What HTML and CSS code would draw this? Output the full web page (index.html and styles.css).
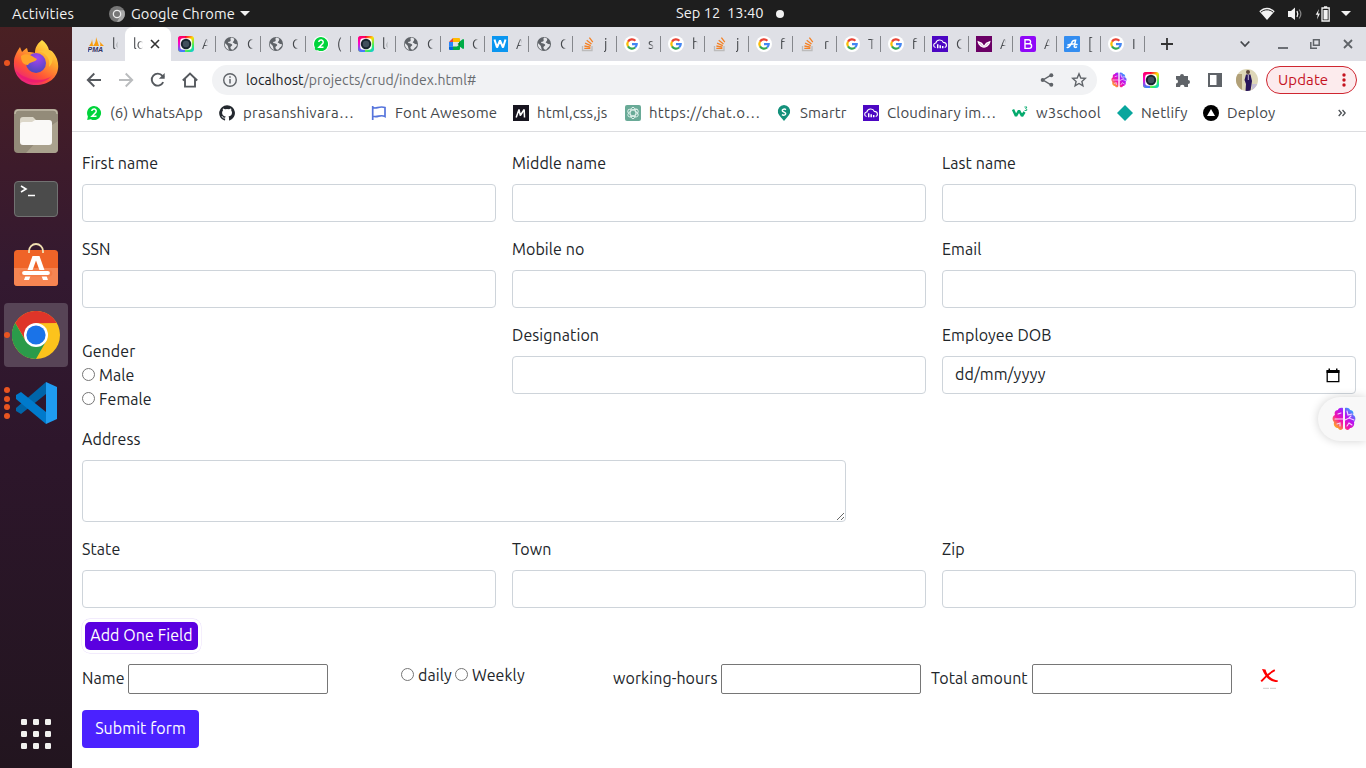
FILE: index.html
```html
<!DOCTYPE html>
<html lang="en">
<head>
<meta charset="utf-8">
<title>localhost/projects/crud</title>
<link rel="stylesheet" href="styles.css">
</head>
<body>
<svg class="defs" width="0" height="0">
  <defs>
    <linearGradient id="rainbow" x1="0" y1="0" x2="1" y2="1"><stop offset="0" stop-color="#f0f"/><stop offset=".25" stop-color="#f03"/><stop offset=".5" stop-color="#fd0"/><stop offset=".78" stop-color="#3e6"/><stop offset="1" stop-color="#0bf"/></linearGradient>
    <linearGradient id="camleft" x1="0" y1="0" x2="0" y2="1"><stop offset="0" stop-color="#ff0059"/><stop offset=".45" stop-color="#f0c"/><stop offset="1" stop-color="#38f"/></linearGradient>
    <linearGradient id="brainfill" x1="0" y1="1" x2="1" y2="0"><stop offset="0.15" stop-color="#ffa02c"/><stop offset=".38" stop-color="#f413a8"/><stop offset=".62" stop-color="#b414f5"/><stop offset=".85" stop-color="#389fff"/></linearGradient>
    <linearGradient id="ffbody" x1=".8" y1="0" x2=".2" y2="1"><stop offset="0" stop-color="#fff04f"/><stop offset=".35" stop-color="#ffa52c"/><stop offset=".68" stop-color="#ff5237"/><stop offset="1" stop-color="#e6178c"/></linearGradient>
    <radialGradient id="ffglobe" cx=".55" cy=".25" r=".8"><stop offset="0" stop-color="#a544f0"/><stop offset="1" stop-color="#4548b8"/></radialGradient>
    <symbol id="camera" viewBox="0 0 16 16"><rect width="16" height="16" rx="3" fill="url(#rainbow)"/><path d="M3 0H7V16H3A3 3 0 0 1 0 13V3A3 3 0 0 1 3 0" fill="url(#camleft)"/><rect x="2.2" y="2.2" width="11.6" height="11.6" rx="3" fill="#fff"/><circle cx="8" cy="8" r="5.2" fill="#18262f"/><circle cx="8" cy="8" r="3.2" fill="#41505c"/></symbol>
    <symbol id="globe" viewBox="0 0 16 16"><circle cx="8" cy="8" r="7" fill="#5f6368"/><path d="M8.5 1.5C6 3 9 4 7 5.5L5 6C5 8 8 7 9 8.5C10 10 7 10 7.5 12C8 14 10 14 11 13C12 11 14 11 14 8C12.5 9 11.5 7 10 6.7C9 6 12 5 11 2.5ZM1.8 7L4 9C5.5 10 5 12 6 14C3.5 13 1.8 11 1.8 8" fill="#e4e5e9"/></symbol>
    <symbol id="whats" viewBox="0 0 16 16"><path d="M8 1A7 7 0 1 1 4.8 14.2L1.2 15 1.9 11.4A7 7 0 0 1 8 1" fill="#00d43b"/><path d="M5.8 6A2.2 2.2 0 1 1 9.9 7.2L6 11.2H10.5" fill="none" stroke="#fff" stroke-width="1.5"/></symbol>
    <symbol id="meet" viewBox="0 0 16 16"><path d="M1 6L5 2V6Z" fill="#ea4335"/><path d="M5 2H11Q12 2 12 3V6H5Z" fill="#ffba00"/><path d="M1 6H5V10.5H1Z" fill="#2684fc"/><path d="M1 10.5H5V14H2Q1 14 1 13Z" fill="#0066da"/><path d="M5 10.5H9L12 8V13Q12 14 11 14H5ZM11 6L15 3Q16 3 16 4V12Q16 13 15 13L11 10Z" fill="#00ac47"/><path d="M9.5 8L12 6V10Z" fill="#00832d"/></symbol>
    <symbol id="stack" viewBox="0 0 16 16"><path d="M2.5 10V14.5H12V10" fill="none" stroke="#bcbbbb" stroke-width="1.3"/><path d="M4.3 12.4H10.4M4.4 10L10.4 11.1M5.1 7.2L10.8 9.6M6.7 4.2L11.5 7.9M9.4 1.6L12.8 6.2" stroke="#f48024" stroke-width="1.3"/></symbol>
    <symbol id="google" viewBox="0 0 16 16"><circle cx="8" cy="8" r="8" fill="#fff"/><g fill="none" stroke-width="2.2"><path d="M4 5.6A4.7 4.7 0 0 1 11.4 4.7" stroke="#ea4335"/><path d="M4 5.6A4.7 4.7 0 0 0 4 10.4" stroke="#fbbc05"/><path d="M4 10.4A4.7 4.7 0 0 0 11.1 11.5" stroke="#34a853"/><path d="M8 8.2H12.7A4.7 4.7 0 0 1 11.1 11.5" stroke="#4285f4"/></g></symbol>
    <symbol id="cloud" viewBox="0 0 16 16"><rect width="16" height="16" fill="#4c06c3"/><path d="M3.6 11.5C.8 11 1.2 7.2 3.8 7C4.7 3.3 10.1 3 11.3 6.4C15 6.4 15.3 10.8 12.7 11.5" fill="none" stroke="#fff" stroke-width="1.1"/><path d="M5.7 8.2V12.3M8.2 9.2V12.3M10.7 10V12.3" stroke="#fff" stroke-width="1.5"/></symbol>
    <symbol id="wing" viewBox="0 0 16 16"><rect width="16" height="16" fill="#6b0065"/><path d="M1.4 4.7L6 6.7 8 9.4 10 6.7 14.6 4.7C14 9 11.5 11 8 11.8C4.5 11 2 9 1.4 4.7" fill="#fff"/><path d="M3.5 7L7 10.5M12.5 7L9 10.5" stroke="#c98ac4" stroke-width=".8"/></symbol>
    <symbol id="brain" viewBox="0 0 24 24"><path d="M11 1C8 0 6 2 6 3C3 3 2 6 3 8C0 9 0 13 2 15C1 19 4 21 6 21C7 24 11 23 11 21ZM13 1C16 0 18 2 18 3C21 3 22 6 21 8C24 9 24 13 22 15C23 19 20 21 18 21C17 24 13 23 13 21Z" fill="url(#brainfill)"/><path d="M6 7L9 6M3 12H11M5 17L8 16V19M15 4L16 8 20 7M13 13L17 11 22 13M15 19L17 16 20 18M17 11L19 9" fill="none" stroke="#f5d9ff" stroke-width="1.1" stroke-linecap="round"/></symbol>
  </defs>
</svg>

<header class="topbar">
  <span class="activities">Activities</span>
  <div class="appmenu">
    <svg width="16" height="16" viewBox="0 0 16 16"><circle cx="8" cy="8" r="8" fill="#777"/><path d="M8 4.3H15A8 8 0 0 1 8 16L11.3 9.8Z" fill="#aaa"/><circle cx="8" cy="8" r="4.3" fill="#eee"/><circle cx="8" cy="8" r="3" fill="#777"/></svg>
    <span class="appname">Google Chrome</span>
    <svg width="10" height="5"><path d="M0 0H10L5 5Z" fill="#f2f2f2"/></svg>
  </div>
  <div class="clock"><span class="clocktext">Sep 12 &nbsp;13:40</span><i class="dot"></i></div>
  <div class="status">
    <svg width="16" height="16" viewBox="0 0 16 16"><path d="M.3 5.2C5 .6 11 .6 15.7 5.2L8 14Z" fill="#f2f2f2"/><path d="M1.8 6.2C5.6 3 10.4 3 14.2 6.2" fill="none" stroke="#1e1e1e" stroke-width="1"/></svg>
    <svg width="16" height="16" viewBox="0 0 16 16"><path d="M1 5H4L8 1.5V14L4 11H1Z" fill="#f2f2f2"/><path d="M10 5Q11.6 8 10 11" fill="none" stroke="#f2f2f2" stroke-width="1.3"/><path d="M12.2 3.5Q15.5 8 12.2 12.5" fill="none" stroke="#888" stroke-width="1.2"/></svg>
    <svg width="16" height="16" viewBox="0 0 16 16"><path d="M4 3L.7 8.8H2.8L2 13.5 5 7.5H3Z" fill="#f2f2f2"/><path d="M7 2H14.2V15H7ZM9 .8H12.2" fill="none" stroke="#f2f2f2" stroke-width="1.3"/><path d="M8.5 4H12.7V13.5H8.5Z" fill="#f2f2f2"/></svg>
    <svg width="10" height="5"><path d="M0 0H10L5 5Z" fill="#f2f2f2"/></svg>
  </div>
</header>

<div class="desktop">
<aside class="dock">
  <div class="app run1"><svg width="46" height="48" viewBox="0 0 46 48"><path d="M29 1C33 4 35 7 36 11C39 11 42 15 44 20C49 35 38 46 23 46C9 46 0 36 1 23C1 17 4 13 7 8L9 13C11 11 12 10 14 9L15 13C18 13 19 13 22 14C22 8 25 4 29 1" fill="url(#ffbody)"/><circle cx="23" cy="24" r="10" fill="url(#ffglobe)"/><path d="M8 17C12 14 17 15 22 19L24 20C22 24 17 22 15 26C10 26 8 22 8 17" fill="#ffa32a"/><path d="M22 13C32 11 38 19 36 28C41 23 41 15 36 11Z" fill="#ffc338"/><path d="M2 31C7 43 30 51 41 34C36 44 13 43 2 31" fill="#e91379" opacity=".65"/></svg></div>
  <div class="app"><svg width="44" height="44" viewBox="0 0 44 44"><rect width="44" height="44" rx="4" fill="#938b79"/><path d="M1 5Q1 1 5 1H39Q43 1 43 5" fill="none" stroke="#c1b9a6" stroke-width="1.3"/><path d="M44 12V40Q44 44 40 44H12L38 16Z" fill="#aaa28e"/><path d="M6 11Q6 8 9 8H19L22 11H34Q37 11 37 15H6Z" fill="#dcd7c9"/><path d="M6 16Q6 13 9 13H18L21 11H35Q38 11 38 14V33Q38 36 35 36H9Q6 36 6 33Z" fill="#faf9f7"/></svg></div>
  <div class="app"><svg width="44" height="36" viewBox="0 0 44 36"><rect x=".5" y=".5" width="43" height="35" rx="3.5" fill="#4b4b4b" stroke="#727272"/><path d="M7 5L12 8 7 11" fill="none" stroke="#fff" stroke-width="1.6"/><path d="M14 14.5H21" stroke="#fff" stroke-width="1.5"/></svg></div>
  <div class="app store"><svg width="44" height="46" viewBox="0 0 44 46"><rect y="8" width="44" height="36" rx="3.5" fill="#ef6428"/><path d="M0 26H44V40.5Q44 44 40.5 44H3.5Q0 44 0 40.5Z" fill="#f68552"/><path d="M15 11V9A7 7 0 0 1 29 9V11" fill="none" stroke="#f1dfb2" stroke-width="1.8"/><path d="M18.5 14H25.5L34 38H29L22 18.5 15 38H10Z" fill="#fff"/><path d="M9 31.2H35" stroke="#f47a44" stroke-width="6.6" stroke-linecap="round"/><path d="M10.2 31H33.8" stroke="#fff" stroke-width="4.2" stroke-linecap="round"/></svg></div>
  <div class="app active run1"><svg width="48" height="48" viewBox="0 0 48 48"><circle cx="24" cy="24" r="24" fill="#fcc31c"/><path d="M3.2 12A24 24 0 0 1 44.8 12L24 12.2 14 30Z" fill="#df3529"/><path d="M3.2 12L13.7 30 34.2 30 24 48A24 24 0 0 1 3.2 12" fill="#2b9b4a"/><circle cx="24" cy="24" r="12" fill="#fff"/><circle cx="24" cy="24" r="9.6" fill="#1a73e8"/></svg></div>
  <div class="app run4"><svg width="42" height="42" viewBox="0 0 42 42"><path d="M1 26L31 0V12L6 32 1 29Z" fill="#0065a9"/><path d="M1 13L6 10 31 30V42L1 17Z" fill="#007acc"/><path d="M31 0L42 5V37L31 42Z" fill="#1f9cf0"/></svg></div>
  <svg class="grid" width="30" height="31" viewBox="0 0 30 31"><g fill="#f1f1ef"><rect width="6" height="6" rx="1.2"/><rect x="12" width="6" height="6" rx="1.2"/><rect x="24" width="6" height="6" rx="1.2"/><rect y="12" width="6" height="6" rx="1.2"/><rect x="12" y="12" width="6" height="6" rx="1.2"/><rect x="24" y="12" width="6" height="6" rx="1.2"/><rect y="24" width="6" height="6" rx="1.2"/><rect x="12" y="24" width="6" height="6" rx="1.2"/><rect x="24" y="24" width="6" height="6" rx="1.2"/></g></svg>
</aside>

<div class="window">
  <div class="tabs">
    <div class="tab first"><svg width="16" height="16" viewBox="0 0 16 16"><path d="M1 10C3 8 4 5 4 3L5 10ZM5 10C8 7 8 3 8 1L11 10ZM10 4C12 6 13 8 12 10H16Z" fill="#f89c0e"/><text x="-.5" y="15.5" class="pma">PMA</text></svg><span>lo</span></div>
    <div class="tab current"><span>lo</span><svg width="10" height="10" viewBox="0 0 10 10"><path d="M1 1L9 9M9 1L1 9" stroke="#333" stroke-width="1.6"/></svg></div>
    <div class="tab w"><svg><use href="#camera"/></svg><span>A</span></div>
    <div class="tab w"><svg><use href="#globe"/></svg><span>C</span></div>
    <div class="tab w"><svg><use href="#globe"/></svg><span>C</span></div>
    <div class="tab w"><svg class="halo"><use href="#whats"/></svg><span>(</span></div>
    <div class="tab w"><svg><use href="#camera"/></svg><span>lo</span></div>
    <div class="tab w"><svg><use href="#globe"/></svg><span>C</span></div>
    <div class="tab"><svg><use href="#meet"/></svg><span>C</span></div>
    <div class="tab"><svg viewBox="0 0 16 16"><rect width="16" height="16" fill="#0a96f0"/><path d="M2.5 3.5L5 11.5 8 4.5 11 11.5 13.5 3.5" fill="none" stroke="#fff" stroke-width="2" stroke-linejoin="bevel"/></svg><span>A</span></div>
    <div class="tab"><svg><use href="#globe"/></svg><span>C</span></div>
    <div class="tab"><svg><use href="#stack"/></svg><span>j</span></div>
    <div class="tab"><svg><use href="#google"/></svg><span>s</span></div>
    <div class="tab"><svg><use href="#google"/></svg><span>h</span></div>
    <div class="tab"><svg><use href="#stack"/></svg><span>j</span></div>
    <div class="tab"><svg><use href="#google"/></svg><span>f</span></div>
    <div class="tab"><svg><use href="#stack"/></svg><span>r</span></div>
    <div class="tab"><svg><use href="#google"/></svg><span>T</span></div>
    <div class="tab"><svg><use href="#google"/></svg><span>f</span></div>
    <div class="tab"><svg><use href="#cloud"/></svg><span>C</span></div>
    <div class="tab"><svg><use href="#wing"/></svg><span>A</span></div>
    <div class="tab"><svg viewBox="0 0 16 16"><rect width="16" height="16" rx="2" fill="#9008f8"/><path d="M5 3.7H9A2.1 2.1 0 0 1 9 7.8H5ZM5 7.8H9.3A2.3 2.3 0 0 1 9.3 12.4H5Z" fill="none" stroke="#fff" stroke-width="1.4"/></svg><span>A</span></div>
    <div class="tab"><svg viewBox="0 0 16 16"><rect width="16" height="16" rx="1" fill="#338df0"/><path d="M3.2 11.5Q6 11.5 7.8 6.5Q8.6 4 11.6 4.2L10.2 10.5Q10.4 12 12.5 11M4 9Q8 7.6 13 8.4" fill="none" stroke="#fff" stroke-width="1.5" stroke-linecap="round"/></svg><span>[</span></div>
    <div class="tab"><svg><use href="#google"/></svg><span>I</span></div>
    <svg class="plus" width="12" height="12" viewBox="0 0 12 12"><path d="M6 0V12M0 6H12" stroke="#333" stroke-width="1.8"/></svg>
    <div class="winctl">
      <svg width="10" height="8" viewBox="0 0 10 8"><path d="M.7 1.5L5 6 9.3 1.5" fill="none" stroke="#45484c" stroke-width="1.8"/></svg>
      <svg width="10" height="10" viewBox="0 0 10 10"><path d="M0 9H10" stroke="#5f6368" stroke-width="1.8"/></svg>
      <svg width="10" height="10" viewBox="0 0 10 10"><path d="M3.5 .8H9.2V6.2H3.5ZM.8 3V9.2H7" fill="none" stroke="#5f6368" stroke-width="1.5"/></svg>
      <svg width="10" height="10" viewBox="0 0 10 10"><path d="M1 1L9 9M9 1L1 9" stroke="#5f6368" stroke-width="1.8"/></svg>
    </div>
  </div>

  <div class="toolbar">
    <div class="tool"><svg viewBox="0 0 16 16"><path d="M15 8H2M8.3 1.5L1.8 8 8.3 14.5" fill="none" stroke="#55595e" stroke-width="1.9"/></svg></div>
    <div class="tool"><svg viewBox="0 0 16 16"><path d="M1 8H14M7.7 1.5L14.2 8 7.7 14.5" fill="none" stroke="#babcbe" stroke-width="1.9"/></svg></div>
    <div class="tool"><svg viewBox="0 0 16 16"><path d="M13.2 10.2A6 6 0 1 1 12.4 3.8L14 5.4" fill="none" stroke="#55595e" stroke-width="1.9"/><path d="M14.7 1V6.8H8.9Z" fill="#55595e"/></svg></div>
    <div class="tool"><svg viewBox="0 0 16 16"><path d="M.8 8.5L8 1.5 15.2 8.5M3 7V14.6H13V7" fill="none" stroke="#55595e" stroke-width="1.9"/></svg></div>
    <div class="omnibox">
      <svg viewBox="0 0 16 16"><circle cx="8" cy="8" r="6.3" fill="none" stroke="#5f6368" stroke-width="1.4"/><path d="M8 7V11.5M8 4.2V5.8" stroke="#5f6368" stroke-width="1.5"/></svg>
      <span class="url"><b>localhost</b>/projects/crud/index.html#</span>
      <svg viewBox="0 0 16 16"><path d="M12 3.2L4 8 12 12.8" fill="none" stroke="#5f6368" stroke-width="1.4"/><circle cx="12.3" cy="3.2" r="2" fill="#5f6368"/><circle cx="3.7" cy="8" r="2" fill="#5f6368"/><circle cx="12.3" cy="12.8" r="2" fill="#5f6368"/></svg>
      <svg viewBox="0 0 16 16"><path d="M8 1.8L9.8 6 14.3 6.4 10.9 9.4 11.9 13.9 8 11.5 4.1 13.9 5.1 9.4 1.7 6.4 6.2 6Z" fill="none" stroke="#5f6368" stroke-width="1.4"/></svg>
    </div>
    <div class="tool"><svg><use href="#brain"/></svg></div>
    <div class="tool"><svg><use href="#camera"/></svg></div>
    <div class="tool"><svg viewBox="0 0 16 16"><path d="M1 4H5A2 2 0 1 1 9 4H13V8A2 2 0 1 1 13 12V15H9.5A2 2 0 0 0 5 15H1V11.5A2 2 0 0 0 1 7.5Z" fill="#5f6368"/></svg></div>
    <div class="tool"><svg viewBox="0 0 16 16"><path d="M2 2H14V14H2Z" fill="none" stroke="#5f6368" stroke-width="2"/><path d="M9.5 1H15V15H9.5Z" fill="#5f6368"/></svg></div>
    <div class="tool"><svg class="avatar" viewBox="0 0 22 22"><defs><clipPath id="round"><circle cx="11" cy="11" r="11"/></clipPath></defs><g clip-path="url(#round)"><path d="M0 0H22V22H0Z" fill="#ded7b8"/><path d="M0 5H6V22H0Z" fill="#b1a078"/><path d="M16 15H22V22H16Z" fill="#c6bed4"/><path d="M10 5.5H14.5L16 12 14.5 22H9.5L10 15 8.5 11Z" fill="#28155a"/><circle cx="12" cy="3" r="2" fill="#5c4639"/><path d="M12.3 6V11" stroke="#e5dced" stroke-width=".8"/></g></svg></div>
    <div class="update"><span>Update</span><svg width="4" height="14" viewBox="0 0 4 14"><g fill="#c5121f"><circle cx="2" cy="2" r="1.7"/><circle cx="2" cy="7" r="1.7"/><circle cx="2" cy="12" r="1.7"/></g></svg></div>
  </div>

  <nav class="bookmarks">
    <a><svg><use href="#whats"/></svg><span>(6) WhatsApp</span></a>
    <a><svg viewBox="0 0 16 16"><path d="M8 .3A7.8 7.8 0 0 0 5.5 15.5C6 15.6 6.1 15.3 6.1 15V13.5C4 14 3.5 12.6 3.5 12.6C3.2 11.8 2.7 11.5 2.7 11.5C2 11 2.8 11 2.8 11C3.6 11.1 4 11.9 4 11.9C4.7 13.1 5.8 12.7 6.2 12.5C6.3 12 6.5 11.7 6.7 11.5C5 11.3 3.1 10.6 3.1 7.6C3.1 6.8 3.4 6.1 4 5.5C3.8 5.2 3.6 4.4 4 3.4C4 3.4 4.7 3.2 6.1 4.2A7 7 0 0 1 10 4.2C11.4 3.2 12 3.4 12 3.4C12.5 4.4 12.3 5.2 12.2 5.5C12.7 6.1 13 6.8 13 7.6C13 10.6 11.2 11.3 9.5 11.5C9.8 11.8 10 12.3 10 12.9V15C10 15.3 10.1 15.6 10.6 15.5A7.8 7.8 0 0 0 8 .3" fill="#24292f"/></svg><span class="cut">prasanshivara…</span></a>
    <a><svg viewBox="0 0 16 16"><path d="M1.7 1V15M2 2.5C5 4.5 8 .5 14 2.5V11.5C9 9 7 13 2 11.3" fill="none" stroke="#5574dc" stroke-width="1.7"/></svg><span>Font Awesome</span></a>
    <a><svg viewBox="0 0 16 16"><rect width="16" height="16" fill="#17151f"/><path d="M3.2 12.5L6 4.5 7.3 10.5 11.2 4.5 11.5 12.5" fill="none" stroke="#fff" stroke-width="1.5" stroke-linejoin="bevel"/></svg><span>html,css,js</span></a>
    <a><svg viewBox="0 0 16 16"><rect width="16" height="16" rx="2" fill="#69aa97"/><g fill="none" stroke="#e5f3ee" stroke-width=".9"><ellipse cx="8" cy="8" rx="2.8" ry="5.7"/><ellipse cx="8" cy="8" rx="2.8" ry="5.7" transform="rotate(60 8 8)"/><ellipse cx="8" cy="8" rx="2.8" ry="5.7" transform="rotate(120 8 8)"/></g></svg><span class="cut">https://chat.o…</span></a>
    <a><svg viewBox="0 0 16 16"><path d="M8 0A6.5 6.5 0 0 1 14 8C13 11 10 13 8 16C6 13 3 11 2 8A6.5 6.5 0 0 1 8 0" fill="#14917b"/><path d="M10 4.6C8 3.3 5.5 4.6 6.5 6.2L9.4 8C10.5 9.6 8 11 5.9 9.6" fill="none" stroke="#fff" stroke-width="1.4"/></svg><span>Smartr</span></a>
    <a><svg><use href="#cloud"/></svg><span>Cloudinary im…</span></a>
    <a><svg viewBox="0 0 16 16"><path d="M1 4.5L4 11 7 5.5 10 11 12.5 7" fill="none" stroke="#04aa6d" stroke-width="2.5" stroke-linejoin="bevel"/><path d="M12.4 2H15L13.6 3.7Q15.5 4 14.7 5.4L12.5 5.6" fill="none" stroke="#04aa6d" stroke-width=".9"/></svg><span>w3school</span></a>
    <a><svg viewBox="0 0 16 16"><path d="M8 0L16 8 8 16 0 8Z" fill="#08a69d"/></svg><span>Netlify</span></a>
    <a><svg viewBox="0 0 16 16"><circle cx="8" cy="8" r="8" fill="#000"/><path d="M8 4L12 11H4Z" fill="#fff"/></svg><span>Deploy</span></a>
    <svg class="more" width="8" height="8" viewBox="0 0 8 8"><path d="M.7 1L3.4 4 .7 7M4.5 1L7.2 4 4.5 7" fill="none" stroke="#4c5055" stroke-width="1.3"/></svg>
  </nav>

  <main class="page">
    <form class="form">
      <div class="field"><label>First name</label><input type="text"></div>
      <div class="field"><label>Middle name</label><input type="text"></div>
      <div class="field"><label>Last name</label><input type="text"></div>
      <div class="field"><label>SSN</label><input type="text"></div>
      <div class="field"><label>Mobile no</label><input type="text"></div>
      <div class="field"><label>Email</label><input type="text"></div>
      <div class="gender"><div>Gender</div><div><i class="radio"></i>Male</div><div><i class="radio"></i>Female</div></div>
      <div class="field"><label>Designation</label><input type="text"></div>
      <div class="field"><label>Employee DOB</label><div class="date"><span>dd/mm/yyyy</span><svg width="14" height="15" viewBox="0 0 14 15"><path d="M1.2 3H12.8V13.7H1.2Z" fill="none" stroke="#000" stroke-width="1.3"/><path d="M.6 2H13.4V5H.6ZM2.5 .5H4V2H2.5ZM10 .5H11.5V2H10Z"/></svg></div></div>
      <div class="field wide"><label>Address</label><textarea></textarea></div>
      <div class="field"><label>State</label><input type="text"></div>
      <div class="field"><label>Town</label><input type="text"></div>
      <div class="field"><label>Zip</label><input type="text"></div>
    </form>
    <div class="addwrap"><div class="add"><span>Add One Field</span></div></div>
    <div class="line">
      <div class="name"><span>Name</span><input type="text"></div>
      <div class="pay"><i class="radio"></i><span class="daily">daily</span><i class="radio"></i><span>Weekly</span></div>
      <div class="hours"><span>working-hours</span><input type="text"></div>
      <div class="total"><span>Total amount</span><input type="text"></div>
      <svg class="cross" width="18" height="21" viewBox="0 0 18 21"><path d="M2 0L5.5 .5C7 6 11 10.5 18 11.5L17.5 13C10 13 5 8 2 0" fill="#f00"/><path d="M14.8 1.2C9 4 5 8 1.2 12.3" fill="none" stroke="#f00" stroke-width="1.9"/><path d="M3 19.3H16" stroke="#ccc" stroke-dasharray="6 1"/></svg>
    </div>
    <div class="submit"><span>Submit form</span></div>
    <div class="bubble"><svg width="24" height="24"><use href="#brain"/></svg></div>
  </main>
</div>
</div>
</body>
</html>
```
FILE: styles.css
```css
* { box-sizing: border-box; }
body { margin: 0; width: 1366px; height: 768px; overflow: hidden; background: #fff; font-family: Ubuntu, "Noto Sans", sans-serif; font-size: 16px; line-height: 24px; color: #212529; }
svg { display: block; flex: none; }
.defs { position: absolute; }

.topbar { height: 27px; background: #1e1e1e; color: #f2f2f2; display: flex; align-items: center; font-size: 14.67px; line-height: 27px; white-space: nowrap; }
.activities { width: 97px; padding-left: 12px; letter-spacing: .2px; }
.appmenu { display: flex; align-items: center; padding-left: 12px; width: 579px; }
.appname { margin-left: 6px; width: 109px; letter-spacing: .08px; }
.clock { width: 583px; display: flex; align-items: center; }
.clocktext { width: 100px; line-height: 25px; padding-bottom: 2px; }
.dot { width: 8px; height: 8px; border-radius: 50%; background: #f2f2f2; }
.status { display: flex; align-items: center; gap: 12px; }
.status svg:last-child { margin-left: -2px; }

.desktop { display: flex; height: 741px; }
.dock { width: 72px; padding: 4px; background: linear-gradient(#4a2023 0, #3d1b2b 140px, #331930 250px, #2d162b 420px, #22151f 741px); display: flex; flex-direction: column; gap: 4px; align-items: center; }
.app { width: 64px; height: 64px; border-radius: 4px; display: flex; align-items: center; justify-content: center; position: relative; flex: none; }
.app.active { background: #574456; }
.app.store { padding-bottom: 4px; }
.run1::before, .run4::before { content: ""; position: absolute; left: 0; top: 29px; width: 6px; height: 6px; border-radius: 50%; background: #e95420; }
.run4::before { top: 16px; box-shadow: 0 9px #e95420, 0 17px #e95420, 0 26px #e95420; }
.grid { margin-top: auto; margin-bottom: 14px; }

.window { width: 1294px; display: flex; flex-direction: column; position: relative; }
.tabs { height: 34px; background: #dfe0e6; display: flex; align-items: center; flex: none; }
.tab { width: 44px; height: 16px; padding-left: 7px; border-right: 1px solid #85878c; display: flex; align-items: center; flex: none; }
.tab svg { width: 16px; height: 16px; }
.tab.w { width: 45px; }
.tab span { margin-left: 8px; width: 6px; overflow: hidden; font-size: 14px; line-height: 18px; color: #45484c; white-space: nowrap; -webkit-mask-image: linear-gradient(90deg, #000 50%, transparent); mask-image: linear-gradient(90deg, #000 50%, transparent); }
.halo { background: #fff; border-radius: 50%; }
.tab.first { width: 53px; padding-left: 16px; border: 0; }
.tab.current { width: 46px; height: 34px; background: #fff; border: 0; border-radius: 8px 8px 0 0; padding-left: 0; }
.tab.current span { width: 10px; }
.tab.current svg { width: 10px; height: 10px; margin-left: 7px; }
.pma { font: italic bold 7px "Liberation Sans", sans-serif; fill: #333366; }
.plus { margin-left: 16px; }
.winctl { display: flex; align-items: center; gap: 22.5px; margin-left: 67px; }
.winctl svg:first-child { margin-right: 5px; }

.toolbar { height: 38px; display: flex; align-items: center; padding-left: 6px; flex: none; }
.tool { width: 32px; display: flex; justify-content: center; flex: none; }
.tool svg { width: 16px; height: 16px; }
.tool .avatar { width: 22px; height: 22px; }
.omnibox { width: 885px; height: 30px; margin: 0 6px; padding: 0 10px; background: #f1f2f4; border-radius: 15px; display: flex; align-items: center; font-size: 14px; letter-spacing: .08px; }
.omnibox svg { width: 16px; height: 16px; }
.omnibox svg + svg { margin-left: 16px; }
.url { margin-left: 8px; flex: 1; color: #696c70; }
.url b { font-weight: 400; color: #202124; }
.update { width: 91px; height: 28px; margin-left: 3px; border: 1px solid #cf2630; border-radius: 14px; background: #fcebed; color: #c5121f; font-size: 15px; letter-spacing: .1px; display: flex; align-items: center; justify-content: space-between; padding: 0 10px 0 11px; }

.bookmarks { height: 33px; border-bottom: 1px solid #dcdde0; display: grid; grid-template-columns: 133px 152px 142px 112px 151px 87px 149px 105px 86px 135px 8px; align-items: center; padding: 0 0 4px 14px; font-size: 15px; letter-spacing: .14px; color: #45484c; flex: none; }
.bookmarks a { display: flex; align-items: center; gap: 8px; white-space: nowrap; }
.bookmarks a svg { width: 16px; height: 16px; }
.bookmarks .cut { letter-spacing: .3px; }

.page { padding: 19px 10px 0; letter-spacing: .08px; }
.form { display: grid; grid-template-columns: repeat(3, 414px); gap: 16px; }
.field label { display: block; margin-bottom: 9px; }
.field input, .date, textarea { display: block; width: 100%; height: 38px; border: 1px solid #ced4da; border-radius: 4px; background: #fff; outline: 0; }
.field { margin-bottom: -1px; }
.date { padding: 6px 15px 6px 12px; display: flex; align-items: center; justify-content: space-between; }
.date span { margin-top: -2px; }
.wide { grid-column: 1 / 4; }
textarea { width: 764px; height: 62px; }
.gender { padding-top: 16px; }
.gender div { display: flex; align-items: center; }
.radio { width: 13px; height: 13px; border: 1px solid #767676; border-radius: 50%; background: #fff; margin: 0 4px 2px 0; flex: none; }
.addwrap { padding: 12px 0 11px; }
.add { width: 119px; height: 34px; padding: 3px; }
.add span { display: block; height: 28px; width: 113px; border-radius: 5px; background: #5a00e0; color: #fff; text-align: center; line-height: 27px; white-space: nowrap; box-shadow: 0 0 0 3px #fff, 0 0 0 3.4px #e5d8fa; }
.line { display: flex; height: 30px; align-items: center; white-space: nowrap; }
.line > div { display: flex; align-items: center; flex: none; }
.line input { width: 200px; height: 30px; border: 1px solid #767676; border-radius: 2px; padding: 0; flex: none; outline: 0; }
.name span, .hours span, .total span { padding-bottom: 2px; }
.name span { width: 46px; }
.name { width: 319px; }
.pay { width: 212px; padding-bottom: 8px; }
.daily { width: 37px; }
.hours { width: 318px; }
.hours span { width: 108px; }
.total span { width: 101px; }
.cross { margin-left: 28px; }
.submit { margin-top: 16px; width: 117px; height: 38px; border-radius: 4px; background: #4b22ff; color: #fff; text-align: center; line-height: 37px; white-space: nowrap; }
.bubble { position: absolute; right: 0; top: 370px; width: 48px; height: 44px; border-radius: 22px 0 0 22px; background: #f8f8f8; box-shadow: 0 0 10px rgba(0,0,0,.18); display: flex; align-items: center; padding-left: 14px; }
```
